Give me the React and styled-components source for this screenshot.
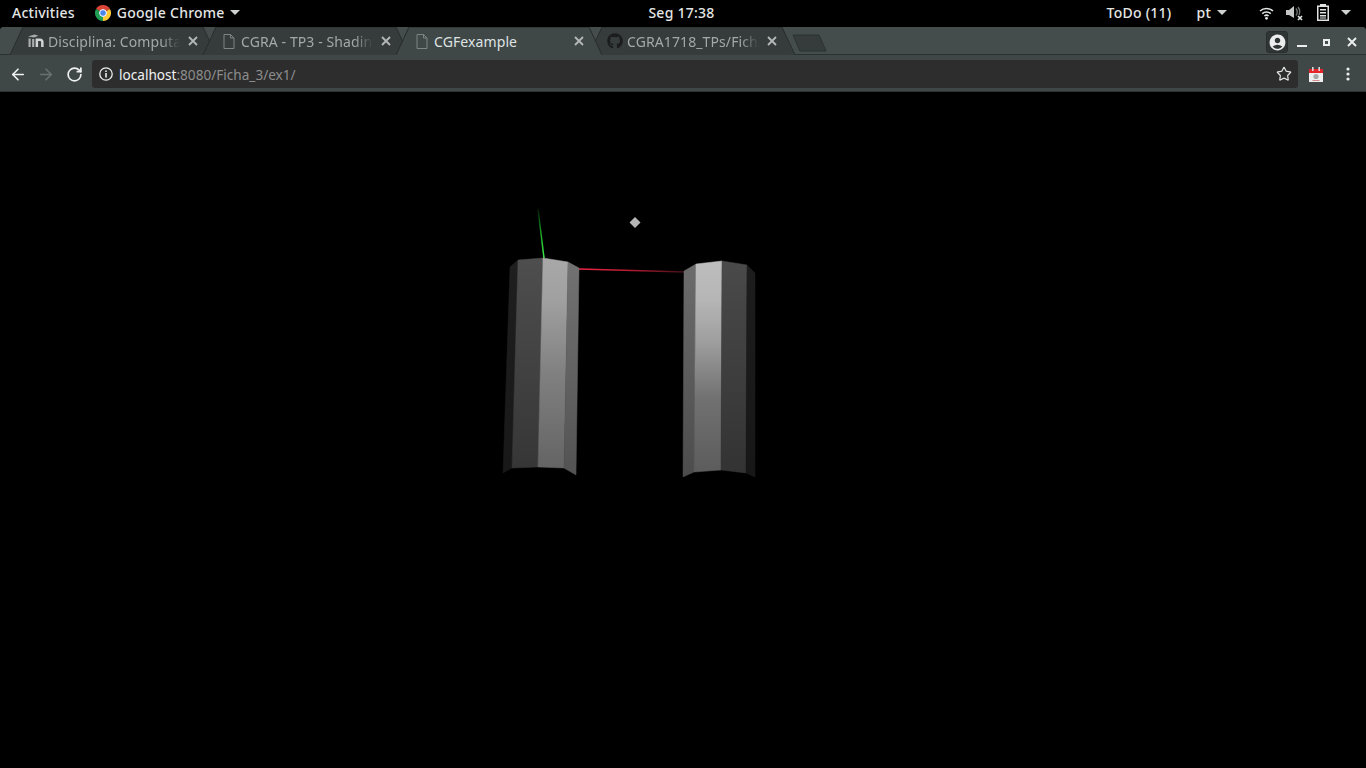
import React from 'react';
import styled, { createGlobalStyle } from 'styled-components';
import { ArrowLeft, ArrowRight, RotateCw, Star } from 'lucide-react';
import { FaGithub } from 'react-icons/fa';
import { MdAccountCircle } from 'react-icons/md';

const GlobalStyle = createGlobalStyle`
  html, body {
    margin: 0;
    padding: 0;
    background: #000;
    overflow: hidden;
  }
`;

const Page = styled.div`
  width: 1366px;
  height: 768px;
  display: flex;
  flex-direction: column;
  background: #000;
  overflow: hidden;
`;

const TopBar = styled.div`
  height: 27px;
  flex: none;
  display: grid;
  grid-template-columns: 1fr auto 1fr;
  align-items: center;
  padding: 0 15px 2px 12px;
  box-sizing: border-box;
  font-family: 'Noto Sans', sans-serif;
  font-size: 14px;
  letter-spacing: 0.25px;
  font-weight: 500;
  color: #e4e6e6;
  background: #000;
`;

const BarGroup = styled.div`
  display: flex;
  align-items: center;
  justify-content: ${(p) => (p.$end ? 'flex-end' : 'flex-start')};
`;

const BarText = styled.span`
  margin-left: ${(p) => p.$ml || 0}px;
  white-space: nowrap;
`;

const Caret = styled.span`
  display: block;
  margin-left: ${(p) => p.$ml || 0}px;
  width: 0;
  height: 0;
  border-left: 5px solid transparent;
  border-right: 5px solid transparent;
  border-top: 5px solid #d0d2d2;
`;

const TraySpacer = styled.span`
  width: 32px;
  flex: none;
`;

const TrayIcon = styled.svg`
  display: block;
  flex: none;
  margin-left: ${(p) => p.$ml || 0}px;
`;

const Window = styled.div`
  flex: none;
  background: #3f4747;
  border-radius: 4px 4px 0 0;
`;

const TabStrip = styled.div`
  position: relative;
  height: 28px;
  display: flex;
  padding-left: 10px;
  box-sizing: border-box;
  background: #444c4c;
  border-radius: 4px 4px 0 0;
  border-bottom: 1px solid #2b3030;
`;

const Tab = styled.div`
  position: relative;
  width: 206px;
  height: 28px;
  flex: none;
  margin-left: ${(p) => (p.$first ? 0 : -13)}px;
  z-index: ${(p) => (p.$active ? 2 : 1)};
  display: flex;
  align-items: center;
  padding: 0 18px 0 18px;
  box-sizing: border-box;
  font-family: 'Noto Sans', sans-serif;
  font-size: 14px;
  letter-spacing: 0.1px;
  color: ${(p) => (p.$active ? '#dfe3e3' : '#a3a8a8')};
`;

const TabShape = styled.svg`
  position: absolute;
  left: 0;
  top: 0;
`;

const TabIconSlot = styled.span`
  position: relative;
  width: 16px;
  height: 16px;
  flex: none;
  display: flex;
  align-items: center;
  justify-content: center;
  color: #a3a8a8;
`;

const TabTitle = styled.span`
  position: relative;
  flex: 1;
  margin-left: 4px;
  overflow: hidden;
  white-space: nowrap;
  mask-image: ${(p) => (p.$active ? 'none' : 'linear-gradient(to right, #000 86%, transparent 100%)')};
`;

const TabClose = styled.svg`
  position: relative;
  flex: none;
  margin-left: 8px;
`;

const NewTab = styled.svg`
  flex: none;
  margin: 7px 0 0 -3px;
  position: relative;
  z-index: 1;
`;

const WindowControls = styled.div`
  position: absolute;
  right: 9px;
  top: 4px;
  display: flex;
  align-items: center;
`;

const ProfileButton = styled.div`
  width: 20px;
  height: 20px;
  display: flex;
  align-items: center;
  justify-content: center;
  background: #2f3434;
  border: 1px solid #2a2e2e;
  border-radius: 3px;
  color: #eceeee;
`;

const WindowIcon = styled.svg`
  display: block;
  margin-left: ${(p) => p.$ml}px;
`;

const Toolbar = styled.div`
  height: 37px;
  box-sizing: border-box;
  display: flex;
  align-items: center;
  padding: 2px 0 0 9px;
  background: #3f4747;
  border-bottom: 1px solid #2b3030;
`;

const NavButton = styled.span`
  width: 18px;
  height: 18px;
  flex: none;
  margin-right: 10px;
  display: flex;
  align-items: center;
  justify-content: center;
  color: ${(p) => (p.$disabled ? '#697070' : '#f0f2f2')};
`;

const Omnibox = styled.div`
  width: 1206px;
  height: 28px;
  margin-left: -1px;
  flex: none;
  display: flex;
  align-items: center;
  padding: 0 6px 0 7px;
  box-sizing: border-box;
  background: #2d2d2d;
  border-radius: 3px;
  font-family: 'Noto Sans', sans-serif;
  font-size: 13.6px;
  color: #8c8c8c;
`;

const InfoIcon = styled.svg`
  display: block;
  flex: none;
  margin-right: 6px;
`;

const UrlHost = styled.span`
  color: #f2f2f2;
`;

const Url = styled.div`
  flex: 1;
  white-space: nowrap;
`;

const ToolbarIcons = styled.div`
  display: flex;
  align-items: center;
`;

const ToolbarGlyph = styled.svg`
  display: block;
  flex: none;
  margin-left: ${(p) => p.$ml}px;
`;

const Viewport = styled.div`
  flex: 1;
  background: #000;
  min-height: 0;
`;

const Scene = styled.svg`
  display: block;
`;

const tabShape = (active) => (
  <TabShape width="206" height="28" viewBox="0 0 206 28">
    <polygon points="0,29 13,0 193,0 206,29" fill={active ? '#3f4747' : '#363c3c'} />
    <polyline points="0,28 13,0 193,0 206,28" fill="none" stroke="#282c2c" strokeWidth="1" />
  </TabShape>
);

const CloseMark = () => (
  <TabClose width="10" height="10" viewBox="0 0 10 10">
    <path d="M1 1l8 8M9 1l-8 8" stroke="#b4b8b8" strokeWidth="1.8" />
  </TabClose>
);

const FileIcon = () => (
  <svg width="12" height="15" viewBox="0 0 12 15">
    <path d="M1 .5h6.5l3.5 3.5v10.5H1zM7.5.5V4H11" fill="none" stroke="#7e8484" strokeWidth="1" />
  </svg>
);

const MoodleIcon = () => (
  <svg width="16" height="14" viewBox="0 0 16 14">
    <path d="M0 2.6L6.5.4l4 1.4-4.5 1.7z" fill="#a8acac" />
    <path d="M1.6 4.5V13M5.2 5v8" stroke="#a8acac" strokeWidth="2.2" />
    <path d="M7.6 13V4.6h4.4c2.2 0 3.6 1.2 3.6 3.4v5h-2.5V8.4c0-.9-.5-1.4-1.4-1.4h-1.6v6z" fill="#cfd3d3" />
  </svg>
);

const ChromeLogo = () => (
  <TrayIcon $ml={20} width="16" height="16" viewBox="0 0 16 16">
    <path d="M8 8L1.07 4A8 8 0 0 1 14.93 4z" fill="#db4437" />
    <path d="M8 8L14.93 4A8 8 0 0 1 8 16z" fill="#fcc934" />
    <path d="M8 8V16A8 8 0 0 1 1.07 4z" fill="#1e9e52" />
    <circle cx="8" cy="8" r="3.4" fill="#4a85ed" stroke="#fff" strokeWidth="1" />
  </TrayIcon>
);

const WifiIcon = () => (
  <TrayIcon $ml={0} width="15" height="14" viewBox="0 0 15 14">
    <path d="M1 5a9.5 9.5 0 0 1 13 0" fill="none" stroke="#e4e6e6" strokeWidth="1.5" />
    <path d="M3.2 7.6a6.4 6.4 0 0 1 8.6 0" fill="none" stroke="#e4e6e6" strokeWidth="1.5" />
    <path d="M5.4 10a3.3 3.3 0 0 1 4.2 0" fill="none" stroke="#e4e6e6" strokeWidth="1.5" />
    <circle cx="7.5" cy="12.3" r="1.4" fill="#e4e6e6" />
  </TrayIcon>
);

const VolumeIcon = () => (
  <TrayIcon $ml={12} width="18" height="16" viewBox="0 0 18 16">
    <path d="M0 5h3l5-4v12l-5-3H0z" fill="#c4c6c6" />
    <path d="M10 3.5a6 6 0 0 1 0 7M12 2a8 8 0 0 1 1 8" fill="none" stroke="#6e7070" strokeWidth="1.4" />
    <path d="M12 11l4 4M16 11l-4 4" stroke="#e4e6e6" strokeWidth="1.6" />
  </TrayIcon>
);

const BatteryIcon = () => (
  <TrayIcon $ml={12} width="14" height="17" viewBox="0 0 14 17">
    <path d="M4 1.5V0h6v1.5h3V17H1V1.5z" fill="#e0e2e2" />
    <path d="M2.5 3h9v12.5h-9z" fill="#000" />
    <path d="M4 5h6v1.4H4zM4 8h6v1.4H4zM4 11h6v1.4H4zM4 13.5h6v1H4z" fill="#e0e2e2" />
  </TrayIcon>
);

const CalendarIcon = () => (
  <ToolbarGlyph $ml={11} width="14" height="15" viewBox="0 0 14 15">
    <path d="M0 2h14v13H0z" fill="#eef0f0" />
    <path d="M0 2h14v4H0z" fill="#e5252a" />
    <path d="M3 0h1.6v4H3zM9.4 0H11v4H9.4z" fill="#d9d9d9" />
    <circle cx="7" cy="9.5" r="2.6" fill="#a8a8a8" />
    <path d="M3.5 13h7v1h-7z" fill="#d98a8a" />
  </ToolbarGlyph>
);

const DotsIcon = () => (
  <ToolbarGlyph $ml={23} width="4" height="14" viewBox="0 0 4 14">
    <circle cx="2" cy="2" r="1.6" fill="#eceeee" />
    <circle cx="2" cy="7" r="1.6" fill="#eceeee" />
    <circle cx="2" cy="12" r="1.6" fill="#eceeee" />
  </ToolbarGlyph>
);

const faces = [
  { id: 'l1', points: '510,267 518,260 512,468 503,473', stops: [[0, '#1f1f1f'], [1, '#181818']] },
  { id: 'l2', points: '518,260 543,258 538,467 512,468', stops: [[0, '#4e4e4e'], [1, '#363636']] },
  { id: 'l3', points: '543,258 568,262 564,468 538,467', stops: [[0, '#a8a8a8'], [0.2, '#a0a0a0'], [0.55, '#808080'], [1, '#646464']] },
  { id: 'l4', points: '568,262 579,268 576,475 564,468', stops: [[0, '#727272'], [1, '#535353']] },
  { id: 'r1', points: '684,271 696,264 694,472 683,477', stops: [[0, '#6c6c6c'], [1, '#4c4c4c']] },
  { id: 'r2', points: '696,264 722,261 721,470 694,472', stops: [[0, '#bdbdbd'], [0.18, '#b6b6b6'], [0.37, '#a0a0a0'], [0.65, '#717171'], [1, '#5c5c5c']] },
  { id: 'r3', points: '722,261 747,265 746,473 721,470', stops: [[0, '#4a4a4a'], [1, '#333333']] },
  { id: 'r4', points: '747,265 755,273 755,477 746,473', stops: [[0, '#1d1d1d'], [1, '#171717']] },
];

function App() {
  return (
    <>
      <GlobalStyle />
      <Page>
        <TopBar>
          <BarGroup>
            <BarText>Activities</BarText>
            <ChromeLogo />
            <BarText $ml={6}>Google Chrome</BarText>
            <Caret $ml={5} />
          </BarGroup>
          <BarText>Seg 17:38</BarText>
          <BarGroup $end>
            <BarText>ToDo (11)</BarText>
            <BarText $ml={25}>pt</BarText>
            <Caret $ml={6} />
            <TraySpacer />
            <WifiIcon />
            <VolumeIcon />
            <BatteryIcon />
            <Caret $ml={11} />
          </BarGroup>
        </TopBar>
        <Window>
          <TabStrip>
            <Tab $first>
              {tabShape(false)}
              <TabIconSlot><MoodleIcon /></TabIconSlot>
              <TabTitle>Disciplina: Computa</TabTitle>
              <CloseMark />
            </Tab>
            <Tab>
              {tabShape(false)}
              <TabIconSlot><FileIcon /></TabIconSlot>
              <TabTitle>CGRA - TP3 - Shadin</TabTitle>
              <CloseMark />
            </Tab>
            <Tab $active>
              {tabShape(true)}
              <TabIconSlot><FileIcon /></TabIconSlot>
              <TabTitle $active>CGFexample</TabTitle>
              <CloseMark />
            </Tab>
            <Tab>
              {tabShape(false)}
              <TabIconSlot><FaGithub size={16} color="#1b1d1d" /></TabIconSlot>
              <TabTitle>CGRA1718_TPs/Fich</TabTitle>
              <CloseMark />
            </Tab>
            <NewTab width="36" height="18" viewBox="0 0 36 18">
              <polygon points="1,1 27,1 34,17 8,17" fill="#363c3c" stroke="#2b3030" strokeLinejoin="round" />
            </NewTab>
            <WindowControls>
              <ProfileButton><MdAccountCircle size={19} /></ProfileButton>
              <WindowIcon $ml={9} width="10" height="10" viewBox="0 0 10 10">
                <path d="M0 8h10v2H0z" fill="#eceeee" />
              </WindowIcon>
              <WindowIcon $ml={16} width="7" height="7" viewBox="0 0 7 7">
                <path d="M0 0h7v7H0zM2 2v3h3V2z" fill="#eceeee" fillRule="evenodd" />
              </WindowIcon>
              <WindowIcon $ml={17} width="10" height="10" viewBox="0 0 10 10">
                <path d="M1 1l8 8M9 1l-8 8" stroke="#eceeee" strokeWidth="2" />
              </WindowIcon>
            </WindowControls>
          </TabStrip>
          <Toolbar>
            <NavButton><ArrowLeft size={19} strokeWidth={2.2} /></NavButton>
            <NavButton $disabled><ArrowRight size={19} strokeWidth={2.2} /></NavButton>
            <NavButton><RotateCw size={17} strokeWidth={2.4} /></NavButton>
            <Omnibox>
              <InfoIcon width="14" height="14" viewBox="0 0 14 14">
                <circle cx="7" cy="7" r="6.2" fill="none" stroke="#eceeee" strokeWidth="1.3" />
                <path d="M6.2 6h1.6v4.5H6.2zM6.2 3.4h1.6V5H6.2z" fill="#eceeee" />
              </InfoIcon>
              <Url><UrlHost>localhost</UrlHost>:8080/Ficha_3/ex1/</Url>
              <Star size={16} color="#e0e2e2" strokeWidth={1.8} />
            </Omnibox>
            <ToolbarIcons>
              <CalendarIcon />
              <DotsIcon />
            </ToolbarIcons>
          </Toolbar>
        </Window>
        <Viewport>
          <Scene width="1366" height="676" viewBox="0 92 1366 676">
            <defs>
              {faces.map((f) => (
                <linearGradient key={f.id} id={f.id} x1="0" y1="0" x2="0" y2="1">
                  {f.stops.map(([offset, color]) => (
                    <stop key={offset} offset={offset} stopColor={color} />
                  ))}
                </linearGradient>
              ))}
              <linearGradient id="axisY" gradientUnits="userSpaceOnUse" x1="538" y1="209" x2="544" y2="258">
                <stop offset="0" stopColor="#021a04" />
                <stop offset="0.5" stopColor="#17a024" />
                <stop offset="1" stopColor="#3df04a" />
              </linearGradient>
              <linearGradient id="axisX" gradientUnits="userSpaceOnUse" x1="579" y1="269" x2="686" y2="272">
                <stop offset="0" stopColor="#f02645" />
                <stop offset="0.5" stopColor="#b01a30" />
                <stop offset="1" stopColor="#3a1016" />
              </linearGradient>
            </defs>
            <line x1="538" y1="209" x2="544" y2="258" stroke="url(#axisY)" strokeWidth="1.5" />
            <line x1="579" y1="269" x2="686" y2="272" stroke="url(#axisX)" strokeWidth="1.6" />
            <polygon points="635,217 640.5,222.5 635,228 629.5,222.5" fill="#b6b6b6" />
            {faces.map((f) => (
              <polygon key={f.id} points={f.points} fill={`url(#${f.id})`} stroke={`url(#${f.id})`} strokeWidth="0.5" />
            ))}
          </Scene>
        </Viewport>
      </Page>
    </>
  );
}

export default App;
